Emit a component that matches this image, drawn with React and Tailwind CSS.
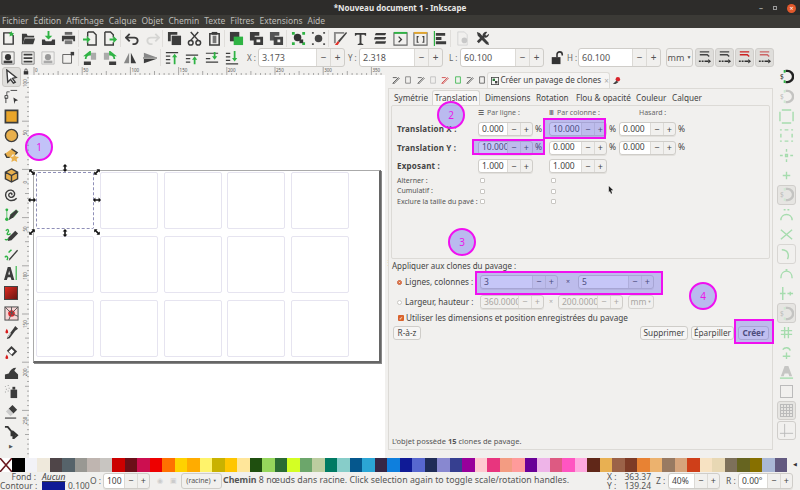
const P = ({ d, c = "#3c3c3c", s, w = 1.5 }) => (
  <path d={d} fill={s ? "none" : c} stroke={s ? c : "none"} strokeWidth={s ? w : 0} />
);

const G = "#2fb344";

// 16x16 drawings for the toolbars
const icons = {
  new: <><P d="M3 2h7l3 3v9H3z" c="#333" s /><P d="M11 0l1 2 2 .3-1.500 1.500.4 2-1.900-1-1.900 1 .4-2L8 2.300 10 2z" c={G} /></>,
  open: <><P d="M1 3h5l1 2h7v2H4l-2 7H1z" /><P d="M4 8h11l-2 6H2z" /></>,
  imp: <><P d="M7 0h2v5h3L8 9 4 5h3z" c={G} /><P d="M1 9h3l1 2h6l1-2h3v6H1z" /></>,
  print: <><P d="M4 1h8v3H4z" c="#666" /><P d="M1 5h14v6h-2V9H3v2H1z" /><P d="M4 10h8v4H4z" c="#777" /></>,
  impDoc: <><P d="M5 1h6l3 3v11H5v-3M5 6V1" s /><P d="M0 8h4V5l4 4-4 4v-3H0z" c={G} /></>,
  expDoc: <><P d="M2 1h6l3 3v3M11 12v3H2V1" s /><P d="M7 8h4V5l4 4-4 4v-3H7z" c={G} /></>,
  undo: <P d="M5 3L1 7l4 4M1 7h9a3.500 3.500 0 0 1 0 7H8" s w={2} />,
  redo: <P d="M11 3l4 4-4 4M15 7H6a3.500 3.500 0 0 0 0 7h2" s c="#d5d5d3" w={2} />,
  dup: <><P d="M1 1h10v3H4v7H1z" /><P d="M5 5h10v10H5z" /></>,
  cut: <><P d="M4 1l8 9M12 1L4 10" s w={1.6} /><circle cx="4" cy="12.500" r="2.500" fill="none" stroke="#3c3c3c" strokeWidth="1.600" /><circle cx="12" cy="12.500" r="2.500" fill="none" stroke="#3c3c3c" strokeWidth="1.600" /></>,
  paste: <><P d="M3 3h10v12H3z" s w={1.6} /><P d="M5 1h6v3H5z" /><P d="M6 5h4v8H6z" c="#777" /></>,
  clone: <><P d="M1 1h10v10H1z" /><P d="M5 6h10v9H5z" c="#2fb344" /></>,
  cloneA: <><P d="M1 1h10v4H6v5H1z" /><P d="M5 6h10v9H5zM8 9v3h4V9z" /></>,
  cloneB: <><P d="M1 1h10v4H6v5H1z" c="#555" /><P d="M5 6h10v9H5zM9 9v3h3V9z" c="#444" /></>,
  group: <><P d="M1 1h3v3H1zM12 1h3v3h-3zM1 12h3v3H1zM12 12h3v3h-3z" c={G} /><circle cx="7" cy="7" r="4" fill="#333" /><P d="M9 9h4v4H9z" c="#333" /></>,
  ungroup: <><P d="M1 1h2v2H1zM13 1h2v2h-2zM1 13h2v2H1zM13 13h2v2h-2z" c="#555" /><circle cx="8" cy="8" r="4" fill="#444" /></>,
  fill: <><P d="M1 1h11v2H3v10H1z" c="#888" /><P d="M14 1l1 1-8 10-2-1z" c="#444" /><P d="M2 15l3-4 2 1-2 3z" c="#e3332a" /></>,
  text: <P d="M2 2h12v3h-1l-1-1H9v9l2 1v1H5v-1l2-1V4H4L3 5H2z" />,
  layers: <P d="M3 2h11l-1 2.500H2zM2 6.500h12l-1 2.500H1zM3 11h11l-1 2.500H2z" />,
  xml: <><P d="M1 2h14v13H1z" s c="#666" w={1.2} /><P d="M1 1h14v2H1z" c={G} /><P d="M6 6l3 3-3 3" s w={1.4} /></>,
  obj: <><P d="M1 2h14v13H1z" s c="#666" w={1.2} /><P d="M1 1h14v2H1z" c="#e2a52c" /><P d="M6 6H4.500v6H6M10 6h1.500v6H10" s w={1.2} /></>,
  align: <><P d="M1.500 0v16" s c={G} w={1.3} /><P d="M3 2h10v3H3zM3 6.500h6v3H3zM3 11h11v3H3z" /></>,
  doc: <><P d="M3 1h7l3 3v11H3z" s c="#d4d4d4" w={1} /><circle cx="10" cy="10" r="3" fill="#c8c8c8" /></>,
  tools: <><P d="M2 1l3 1 9 10 1 3-3-1L3 5z" /><P d="M13 1l-2 3 1 1 3-2a4 4 0 0 1-5 4l-6 6-2-2 6-6a4 4 0 0 1 5-4z" /></>,
  selSame: <><P d="M1 1h14v14H1z" s c="#777" w={1} /><circle cx="8" cy="7" r="3.500" fill="#333" /><P d="M3 11h10v3H3z" /></>,
  selLayers: <><P d="M1 1h14v14H1z" s c="#777" w={1} /><P d="M3 3h10v2H3zM3 7h10v2H3zM3 11h10v2H3z" /></>,
  selFaint: <><P d="M1 1h14v14H1z" s c="#bbb" w={1} /><circle cx="8" cy="7" r="3.500" fill="#9a9a9a" /><P d="M3 11h10v3H3z" c="#aaa" /></>,
  deselect: <><P d="M2 4h10v10H2z" s c="#555" w={1} /><P d="M11 1h4v4h-4z" /></>,
  rotL: <><P d="M9 2h6v8H9z" c="#aaa" /><P d="M1 12h8v4H1z" /><P d="M3 9a5 5 0 0 1 5-5V1l-5 4 1 0" s c={G} w={2} /></>,
  rotR: <><P d="M1 2h6v8H1z" c="#aaa" /><P d="M7 12h8v4H7z" /><P d="M13 9a5 5 0 0 0-5-5V1l5 4-1 0" s c={G} w={2} /></>,
  flipH: <><P d="M7 2v12H1z" c="#888" /><P d="M9 2v12h6z" /></>,
  flipV: <><P d="M1 7h14L1 2z" c="#888" /><P d="M1 9h14l-14 5z" /><P d="M0 8h16" s w={1} /></>,
  top: <><P d="M1 1h14v1.500H1zM1 5h5v1.500H1zM1 9h5v1.500H1zM1 13h5v1.500H1z" /><P d="M11 3l3 4h-2v8h-2V7H8z" c={G} /></>,
  up: <><P d="M1 4h14v1.500H1zM1 8h5v1.500H1zM1 12h5v1.500H1z" /><P d="M11 6l3 4h-2v5h-2v-5H8z" c={G} /></>,
  down: <><P d="M1 3h14v-1H1zM1 8h5v1.500H1zM1 12h14v1.500H1z" /><P d="M11 10l3-4h-2V1h-2v5H8z" c={G} /></>,
  bottom: <><P d="M1 14h14v1.500H1zM1 2h5v1.500H1zM1 6h5v1.500H1zM1 10h5v1.500H1z" /><P d="M11 12l3-4h-2V0h-2v8H8z" c={G} /></>,
  select: <><P d="M3 1l10 8-4 1 3 4-2 1-3-4-3 3z" c="#fff" /><P d="M3 1l10 8-4 1 3 4-2 1-3-4-3 3z" s w={1.5} /></>,
  node: <><P d="M1 7h3v3H1zM7 1.500h7" s c="#444" w={1} /><P d="M3 7V3h3" s c="#555" w={1} /><P d="M10 9l5 3-3 1-1 3z" /><P d="M2 9v6" s w={1} /></>,
  rect: <><P d="M1.500 1.500h13v13h-13z" c="#e9a52a" /><P d="M1.500 1.500h13v13h-13z" s w={1.8} /></>,
  circle: <circle cx="8" cy="8" r="6.500" fill="#e9b04d" stroke="#3c3c3c" strokeWidth="1.500" />,
  star: <><P d="M8 1l6 4-2 2H9l-2 3H3L1 6z" c="#e9b04d" /><P d="M8 1l6 4-2 2M1 6l2 4h3" s w={1.5} /><P d="M11 6l1.500 3 3.500.5-2.500 2.300.6 3.200-3.100-1.600-3.100 1.600.6-3.200L6.500 9.500 10 9z" c="#e9b04d" /></>,
  box: <><P d="M8 1l6.500 3.500v7L8 15l-6.500-3.500v-7z" c="#e9b04d" /><P d="M8 1l6.500 3.500v7L8 15l-6.500-3.500v-7zM1.500 4.500L8 8l6.500-3.500M8 8v7" s w={1.5} /></>,
  spiral: <P d="M8 8.500c1-1 0-2.500-1.500-2-2 .7-2 4 .5 4.500 3 .5 5-2.500 4-5-1-3-5-3.500-7.500-1.500-3 2.500-2 8 2 9.500 3 1 6 .2 8-2" s w={1.5} />,
  pen: <><circle cx="3" cy="3" r="1.500" fill={G} /><circle cx="3" cy="13" r="1.800" fill={G} /><P d="M3 3v10M6 12l1-4 6-5 2 2-5 6z" s c={G} w={0.8} /><P d="M5 14l2-6 6-5 2 2-5 6z" /></>,
  pencil: <><P d="M2 4c2-3 4 0 2 2s1 3 3 1" s c={G} w={1.5} /><P d="M1 13c1 1 3 1 4-1" s c={G} w={1.5} /><P d="M4 15l1-4 7-7 3 3-7 7z" /></>,
  callig: <><P d="M1 11c2-3 4 1 2 3M5 6c1-2 2-2 3-3" s c={G} w={1.5} /><P d="M5 15l1-3 8-9 1 1-8 9z" /></>,
  textA: <><P d="M4 1h3l4 14H8l-1-3H4l-1 3H0zM4.500 9h2L5.500 5z" /><P d="M13 0v15" s c={G} w={1.2} /></>,
  drop: <><P d="M3 4c-2 3-2 5 0 5s2-2 0-5z" c="#d71c1c" /><P d="M12 1l3 3-3 2-6 8-3 1 1-3 6-8z" /><P d="M7 9l-3 4" s c="#fff" w={1} /></>,
  bucket: <><P d="M8 1l6 6-5 5-6-6z" /><P d="M8 4l3 3-3 3-3-3z" c="#fff" /><P d="M3 10c-2 3-2 5 0 5s2-2 0-5z" c="#d71c1c" /></>,
  tweak: <P d="M1 15v-5l4-1c2-4 4-6 8-6l-2 3 4 4v5z" />,
  spray: <><P d="M7 6h7v9H7z" /><P d="M9 3h3v3H9z" /><P d="M1 2h1v1H1zM4 1h1v1H4zM2 5h1v1H2zM5 4h1v1H5zM1 8h1v1H1zM4 7h1v1H4z" c="#999" /></>,
  eraser: <><P d="M9 1l5 5-4 4-5-5z" /><P d="M5 5l5 5-3 3-5-5z" c="#ccc" /><P d="M1 15h12" s w={1.2} /></>,
  conn: <P d="M1 3h3l4 5v4l4 0M10 8.500l4 3.500-4 3.500z" c="#333" s w={2} />,
};

const Icon = ({ n, size = 16 }) => (
  <svg viewBox="0 0 16 16" width={size} height={size}>{icons[n]}</svg>
);

const Spin = ({ v, w, off, h = "h-[14px]" }) => (
  <div className={`flex items-stretch rounded-[3px] border border-[#cfcdc9] text-[8.500px] shadow-[0_1px_0_#e2e0dc] ${off ? "text-[#a9a7a3]" : "text-[#444]"} ${w} ${h}`}>
    <div className={`flex flex-1 items-center overflow-hidden whitespace-nowrap rounded-l-[3px] pl-[3px] ${off ? "bg-[#f1f0ee]" : "bg-white"}`}>{v}</div>
    <div className="flex w-[12.500px] items-center justify-center border-l border-[#dcdad6] text-[9px]">−</div>
    <div className="flex w-[12.500px] items-center justify-center border-l border-[#dcdad6] text-[9px]">+</div>
  </div>
);

const TopSpin = ({ label, v, w, ml }) => (
  <div className={`flex items-center ${ml}`}>
    <span className="mr-[3px] w-[8px] whitespace-nowrap text-[8px] text-[#666]">{label}</span>
    <div className={`flex h-[19px] items-stretch rounded-[3px] border border-[#cfcdc9] text-[9px] leading-[17px] text-[#555] ${w}`}>
      <div className="flex-1 rounded-l-[3px] bg-white pl-[3px]">{v}</div>
      <div className="flex w-[14px] items-center justify-center border-l border-[#dcdad6] text-[10px]">−</div>
      <div className="flex w-[14px] items-center justify-center border-l border-[#dcdad6] text-[10px]">+</div>
    </div>
  </div>
);

const Sep = () => <div className="mr-[1px] h-[17px] w-px bg-[#e0dedb]" />;

const row1 = ["new", "open", "imp", "print", 0, "impDoc", "expDoc", 0, "undo", "redo", 0, "dup", "cut", "paste", 0, "clone", "cloneA", "cloneB", 0, "group", "ungroup", 0, "fill", "text", "layers", "xml", "obj", "align", 0, "doc", "tools"];
const row2 = ["selSame", "selLayers", "selFaint", "deselect", 0, "rotL", "rotR", "flipH", "flipV", 0, "top", "up", "down", "bottom"];
const tools = ["select", "node", "rect", "circle", "star", "box", "spiral", "pen", "pencil", "callig", "textA", "grad", "mesh", "drop", "bucket", "tweak", "spray", "eraser", "conn"];

const palette = ["#000000", "#f2f2f7", "#efe9dc", "#4f4548", "#56636a", "#999893", "#bfb5b0", "#c8c5c1", "#cc0000", "#6b0f18", "#cc0f50", "#ee0000", "#ff7100", "#ffd200", "#ffac00", "#fff36b", "#c9b200", "#ffc600", "#ffe69a", "#1f4f0f", "#96d65c", "#2a6c33", "#d4ff24", "#6ca66b", "#bccda0", "#007a63", "#87cdc9", "#05578d", "#2ba5d5", "#372746", "#0e7fdd", "#0f1a96", "#5767cf", "#1f2c58", "#8888d0", "#363f90", "#98009b", "#ffc9d0", "#e8357e", "#f39c82", "#ff9b9b", "#690097", "#eeb4e8", "#dd5a82", "#ff55c1", "#ffa9df", "#602718", "#e8b052", "#9b6248", "#7e3b26", "#e88233", "#ecb26e", "#987a62", "#d6a47c", "#cf3f19", "#f7e2c2", "#e8d8b4", "#7d705a", "#666420", "#877000", "#aab8d6", "#635a80"];

const Magnet = ({ dark, framed }) => (
  <div className={`flex h-[19.700px] w-[19px] shrink-0 items-center justify-center rounded-[3px] ${framed ? "border border-[#d0cecb] bg-[#e6e5e2]" : ""}`}>
    <svg viewBox="0 0 16 16" width="15" height="15">
      <P d="M7 2h2a6 6 0 0 1 0 12H7" s c={dark ? "#222" : "#c4c4c2"} w={2.600} />
      <P d="M5 1h2v3H5zM5 12h2v3H5z" c={dark ? G : "#cfe8d2"} />
      <text x="1" y="11" fontSize="7" fill={dark ? "#222" : "#bbb"}>$</text>
    </svg>
  </div>
);

const Snap = ({ d, framed }) => (
  <div className={`flex h-[19.700px] w-[19px] shrink-0 items-center justify-center rounded-[3px] ${framed ? "border border-[#d8d6d3]" : ""}`}>
    <svg viewBox="0 0 16 16" width="15" height="15"><P d={d} s c="#a6dcae" w={1.500} /></svg>
  </div>
);

const hLabels = [0, 50, 100, 150, 200, 250, 300, 350];
const vLabels = [100, 50, 0, 50, 100, 150, 200, 250];

const Marker = ({ n, pos }) => (
  <div className={`absolute flex h-[28px] w-[28px] items-center justify-center rounded-full border-2 border-[#f010f0] bg-[#7878f0]/45 text-[10px] text-[#e818e8] ${pos}`}>{n}</div>
);

const Box = ({ pos }) => <div className={`absolute border-2 border-[#f010f0] bg-[#5c5ce8]/35 ${pos}`} />;

const Check = () => <div className="h-[5px] w-[5px] rounded-[1px] border border-[#c9c7c3] bg-white" />;

const Handle = ({ pos, rot }) => (
  <svg viewBox="0 0 10 10" width="8" height="8" className={`absolute ${pos} ${rot}`}>
    <path d="M5 0l3 3H6v4h2l-3 3-3-3h2V3H2z" fill="#111" />
  </svg>
);

export default function App() {
  return (
    <div className="relative flex h-[490px] w-[800px] flex-col overflow-hidden bg-[#f1f0ee] font-['Noto_Sans',sans-serif] text-[#444]">
      <div className="flex h-[15px] items-center justify-center bg-[#2d2c2a] text-[8px] font-bold text-[#e8e8e6]">
        *Nouveau document 1 - Inkscape
        <div className="absolute right-[4px] top-[2px] flex items-center gap-[10px]">
          <span className="text-[8px] text-[#999]">–</span>
          <div className="h-[4px] w-[4px] border border-[#999]" />
          <div className="flex h-[9px] w-[9px] items-center justify-center rounded-full bg-[#e2592c] text-[7px] font-normal leading-none text-white">×</div>
        </div>
      </div>
      <div className="flex h-[13px] items-center gap-[5px] bg-[#3b3a36] pl-[2px] text-[8.500px] text-[#bdbcb8]">
        {["Fichier", "Édition", "Affichage", "Calque", "Objet", "Chemin", "Texte", "Filtres", "Extensions", "Aide"].map((m) => <span key={m}>{m}</span>)}
      </div>

      <div className="ml-[-2px] flex h-[20px] items-center pt-[1px]">
        {row1.map((n, i) => n ? <div key={i} className="flex w-[20px] justify-center"><Icon n={n} size={15} /></div> : <Sep key={i} />)}
      </div>
      <div className="ml-[-2px] flex h-[19px] items-center">
        {row2.map((n, i) => n ? <div key={i} className="flex w-[20px] justify-center"><Icon n={n} size={14} /></div> : <Sep key={i} />)}
        <TopSpin label="X :" v="3.173" w="w-[87px]" ml="ml-[5px]" />
        <TopSpin label="Y :" v="2.318" w="w-[84px]" ml="ml-[3px]" />
        <TopSpin label="L :" v="60.100" w="w-[84px]" ml="ml-[6px]" />
        <svg viewBox="0 0 16 16" width="14" height="14" className="ml-[6px]"><P d="M2 7h10v8H2z" c="#333" /><P d="M8 7V4a3 3 0 0 1 6 0v1" s c="#333" w={1.800} /></svg>
        <TopSpin label="H :" v="60.100" w="w-[83px]" ml="ml-[3px]" />
        <div className="ml-[5px] flex h-[19px] w-[27px] items-center justify-center rounded-[3px] border border-[#cfcdc9] text-[9px] text-[#555]">mm<span className="ml-[2px] text-[5px]">▼</span></div>
        <div className="ml-[2px] flex gap-[1.500px]">
          {["#444", "#444", "#c22", "#c66"].map((c, i) => (
            <div key={i} className="flex h-[19px] w-[18.500px] items-center justify-center rounded-[3px] border border-[#d0cecb] bg-[#dfdedb]">
              <svg viewBox="0 0 16 16" width="15" height="15"><P d="M3 2h10M3 5h8l2 2" s c={c} w={1.500} /><P d="M2 12h2M5 12h2M8 12h4" s c="#333" w={1.500} /><P d="M12 9.500l3 2.500-3 2.500z" c="#333" /></svg>
            </div>
          ))}
        </div>
      </div>

      <div className="flex min-h-0 flex-1">
        <div className="flex w-[22px] flex-col items-center">
          {tools.map((t, i) => (
            <div key={t} className={`relative flex h-[19.700px] w-[19px] shrink-0 items-center justify-center rounded-[3px] ${i === 0 ? "border border-[#c9c7c3] bg-[#dfdedb]" : ""}`}>
              {t === "grad" ? (
                <div className="h-[14px] w-[14px] border-[1.500px] border-[#444] bg-gradient-to-br from-[#e02a20] to-[#6b1512]" />
              ) : t === "mesh" ? (
                <svg viewBox="0 0 16 16" width="15" height="15"><rect x="1" y="1" width="14" height="14" fill="#f5d5d5" stroke="#444" /><circle cx="8" cy="8" r="3.500" fill="#d9282c" /><path d="M1 1l7 7-3 7M15 1L8 8l7 3M8 1v7" fill="none" stroke="#555" /></svg>
              ) : (
                <Icon n={t} size={15} />
              )}
            </div>
          ))}
          <div className="mt-[2px] text-[5px] text-[#555]">▶</div>
        </div>

        <div className="flex w-[366px] flex-col">
          <div className="flex h-[8px]">
            <div className="flex w-[7px] items-center justify-center">
              <svg viewBox="0 0 8 8" width="6" height="7"><P d="M1 3.500h6V8H1z" c="#333" /><P d="M2.500 3.500V2a1.500 1.500 0 0 1 3 0v1.500" s c="#333" w={1} /></svg>
            </div>
            <svg width="356" height="8" className="bg-[#f1f0ee]">
              {Array.from({ length: 74 }, (_, i) => (
                <line key={i} x1={i * 4.820 + 5} x2={i * 4.820 + 5} y1={i % 10 === 0 ? 0 : i % 5 === 0 ? 4 : 6} y2="8" stroke="#777" strokeWidth="0.600" />
              ))}
              {hLabels.map((l, i) => <text key={i} x={i * 48.200 + 6} y="5" fontSize="4.500" fill="#555">{l}</text>)}
            </svg>
          </div>
          <div className="flex min-h-0 flex-1">
            <svg width="7" height="383" className="shrink-0">
              {Array.from({ length: 80 }, (_, i) => (
                <line key={i} x1={i % 10 === 0 ? 0 : i % 5 === 0 ? 3 : 5} x2="7" y1={i * 4.820 - 2} y2={i * 4.820 - 2} stroke="#777" strokeWidth="0.600" />
              ))}
              {vLabels.map((l, i) => <text key={i} transform={`translate(4.500 ${i * 48.200 + 12}) rotate(-90)`} fontSize="4.500" fill="#555">{l}</text>)}
            </svg>
            <div className="w-[356px] bg-white pl-[4px] pt-[95px]">
              <div className="relative grid h-[193px] w-[348px] grid-cols-[repeat(5,58px)] grid-rows-[repeat(3,57px)] gap-x-[5.750px] gap-y-[7px] border border-[#aaa] border-b-[2px] border-r-[2px] border-b-[#666] border-r-[#666] pl-[2px] pt-[1px] shadow-[1px_1px_0_#888]">
                {Array.from({ length: 15 }, (_, i) => (
                  <div key={i} className={`rounded-[2px] border ${i === 0 ? "border-dashed border-[#8f8fb8]" : "border-[#e6e4f0]"}`} />
                ))}
                <Handle pos="left-[-6px] top-[-3px]" rot="-rotate-45" />
                <Handle pos="left-[27px] top-[-7px]" rot="" />
                <Handle pos="left-[59px] top-[-3px]" rot="rotate-45" />
                <Handle pos="left-[-6px] top-[25px]" rot="rotate-90" />
                <Handle pos="left-[59px] top-[25px]" rot="rotate-90" />
                <Handle pos="left-[-6px] top-[57px]" rot="rotate-45" />
                <Handle pos="left-[27px] top-[58px]" rot="" />
                <Handle pos="left-[59px] top-[57px]" rot="-rotate-45" />
              </div>
            </div>
            <div className="relative w-[3px]">
              <div className="absolute left-[0px] top-[184px] text-[7px] leading-none text-[#666]">⋮</div>
            </div>
          </div>
        </div>

        <div className="flex w-[385px] flex-col pt-[5px]">
          <div className="flex h-[16px] items-center pl-[2px]">
            {["#444", "#777", "#555", "#bbb", "#c33", G, "#555", "#555"].map((c, i) => (
              <div key={i} className="flex h-[12px] w-[12.300px] items-center justify-center">
                <svg viewBox="0 0 10 10" width="8" height="8"><P d={i % 2 ? "M2 1h6v8H2z" : "M1 9L8 2l1 1-7 7zM1 2h5"} s c={c} w={1} /></svg>
              </div>
            ))}
            <div className="ml-[-1px] flex h-[16px] w-[123px] items-center rounded-t-[3px] border border-b-0 border-[#dedcd8] bg-[#f6f5f4] pl-[3px] text-[8.100px] text-[#444]">
              <svg viewBox="0 0 10 10" width="8" height="8" className="mr-[1px] shrink-0"><rect x="0.500" y="0.500" width="9" height="9" fill="none" stroke="#444" /><rect x="2" y="2" width="3" height="3" fill="#2a7a3a" /><rect x="5" y="5" width="3" height="3" fill="#444" /></svg>
              <span className="whitespace-nowrap">Créer un pavage de clones</span>
              <span className="ml-[3px] text-[8px] text-[#aaa]">×</span>
            </div>
            <svg viewBox="0 0 10 10" width="9" height="9" className="ml-[2px]"><circle cx="6.500" cy="3.500" r="2.500" fill="#d8232a" /><P d="M1 9l4-4 2 2-3 2z" c="#444" /></svg>
          </div>

          <div className="relative mb-[8px] flex flex-1 flex-col border border-[#dcdad6] bg-[#f1f0ee] px-[2px]">
            <div className="flex h-[16px] items-end whitespace-nowrap pl-[1px] text-[8.200px] text-[#444]">
              <span className="w-[40px] pb-[1px] pl-[2px]">Symétrie</span>
              <span className="flex h-[15px] w-[48px] items-center justify-center rounded-t-[3px] border border-b-0 border-[#d8d6d2] bg-[#f8f7f6]">Translation</span>
              <span className="w-[51px] pb-[1px] pl-[5px]">Dimensions</span>
              <span className="w-[40px] pb-[1px] pl-[5px]">Rotation</span>
              <span className="w-[60px] pb-[1px] pl-[5px]">Flou &amp; opacité</span>
              <span className="w-[36px] pb-[1px] pl-[5px]">Couleur</span>
              <span className="w-[36px] pb-[1px] pl-[5px]">Calquer</span>
            </div>

            <div className="flex h-[154px] flex-col rounded-[2px] border border-[#dcdad6] pl-[5px] pt-[1px]">
              <div className="grid grid-cols-[81px_71px_70px_72px] items-center text-[7px] text-[#666]">
                <span />
                <span className="flex h-[12px] items-center"><span className="mr-[3px] text-[#444]">☰</span>Par ligne :</span>
                <span className="flex h-[12px] items-center"><span className="mr-[3px] text-[#444]">Ⅲ</span>Par colonne :</span>
                <span className="flex h-[12px] items-center pl-[20px]">Hasard :</span>
              </div>
              <div className="mt-[1px] grid grid-cols-[81px_71px_70px_72px] grid-rows-[18.500px_18.500px_18.500px] items-center text-[8.500px]">
                <b className="text-[8px] tracking-[.2px] text-[#444]">Translation X :</b>
                <div className="flex items-center gap-[2px]"><Spin v="0.000" w="w-[55px]" /><span>%</span></div>
                <div className="flex items-center gap-[2px]"><Spin v="10.000" w="w-[58px]" /><span>%</span></div>
                <div className="flex items-center gap-[2px]"><Spin v="0.000" w="w-[57px]" /><span>%</span></div>
                <b className="text-[8px] tracking-[.2px] text-[#444]">Translation Y :</b>
                <div className="flex items-center gap-[2px]"><Spin v="10.000" w="w-[55px]" /><span>%</span></div>
                <div className="flex items-center gap-[2px]"><Spin v="0.000" w="w-[58px]" /><span>%</span></div>
                <div className="flex items-center gap-[2px]"><Spin v="0.000" w="w-[57px]" /><span>%</span></div>
                <b className="text-[8px] tracking-[.2px] text-[#444]">Exposant :</b>
                <Spin v="1.000" w="w-[55px]" />
                <Spin v="1.000" w="w-[58px]" />
                <span />
              </div>
              <div className="grid grid-cols-[81px_71px_70px] grid-rows-[repeat(3,10.500px)] items-center text-[7px] text-[#555]">
                <span>Alterner :</span><span className="pl-[2px]"><Check /></span><span className="pl-[2px]"><Check /></span>
                <span>Cumulatif :</span><span className="pl-[2px]"><Check /></span><span className="pl-[2px]"><Check /></span>
                <span className="whitespace-nowrap">Exclure la taille du pavé :</span><span className="pl-[2px]"><Check /></span><span className="pl-[2px]"><Check /></span>
              </div>
            </div>

            <div className="mt-[1px] pl-[1px] text-[8px] leading-[12px]">Appliquer aux clones du pavage :</div>
            <div className="mt-[3px] flex h-[14px] items-center pl-[6px] text-[8.200px]">
              <div className="mr-[3px] h-[5px] w-[5px] rounded-full border border-[#c9532b] bg-[#fff] shadow-[inset_0_0_0_1px_#d9632b]" />
              <span className="w-[75px] whitespace-nowrap">Lignes, colonnes :</span>
              <Spin v="3" w="w-[78px]" />
              <span className="w-[20px] text-center text-[7px]">×</span>
              <Spin v="5" w="w-[76px]" />
            </div>
            <div className="mt-[6px] flex h-[14px] items-center pl-[6px] text-[8.200px]">
              <div className="mr-[3px] h-[5px] w-[5px] rounded-full border border-[#c9c7c3] bg-white" />
              <span className="w-[75px] whitespace-nowrap">Largeur, hauteur :</span>
              <Spin v="360.0000" w="w-[64px]" off />
              <span className="w-[14px] text-center text-[7px] text-[#aaa]">×</span>
              <Spin v="200.0000" w="w-[65px]" off />
              <div className="ml-[5px] flex h-[14px] w-[26px] items-center justify-center rounded-[3px] border border-[#d5d3cf] text-[8.500px] text-[#a9a7a3]">mm<span className="ml-[1px] text-[4px]">▼</span></div>
            </div>
            <div className="mt-[3px] flex h-[12px] items-center pl-[7px] text-[8.200px]">
              <div className="mr-[2px] flex h-[6px] w-[6px] items-center justify-center rounded-[1px] bg-[#d9632b] text-[5px] leading-none text-white">✓</div>
              Utiliser les dimensions et position enregistrées du pavage
            </div>
            <div className="mt-[2px] flex h-[14px] items-center pl-[2px] text-[8.200px]">
              <div className="flex h-[14px] w-[28px] items-center justify-center rounded-[3px] border border-[#cfcdc9] bg-[#f6f5f4]">R-à-z</div>
              <div className="ml-auto flex h-[14px] w-[48px] items-center justify-center rounded-[3px] border border-[#cfcdc9] bg-[#f6f5f4]">Supprimer</div>
              <div className="ml-[3px] flex h-[14px] w-[43px] items-center justify-center rounded-[3px] border border-[#cfcdc9] bg-[#f6f5f4]">Éparpiller</div>
              <div className="ml-[4px] mr-[1px] flex h-[14px] w-[31px] items-center justify-center rounded-[3px] border border-[#cfcdc9] bg-[#f6f5f4] font-bold">Créer</div>
            </div>
            <div className="mb-[2px] mt-auto pl-[1px] text-[7.500px] text-[#555]">L'objet possède <b>15</b> clones de pavage.</div>
          </div>
        </div>

        <div className="flex w-[27px] flex-col items-center">
          <Magnet dark />
          <Magnet />
          <Snap d="M3 1h10M3 15h10M1 3v10M15 3v10" />
          <Snap d="M1 2h2M13 2h2M1 14h2M13 14h2M6 2h4M6 14h4M2 6v4M14 6v4" />
          <Snap d="M8 1v3M8 12v3M1 8h3M12 8h3M7 7h2v2H7z" />
          <Snap d="M8 4v8M4 8h8" />
          <Magnet framed />
          <Snap d="M2 14C2 6 14 6 14 14M5 3h2M9 3h2" />
          <Snap d="M2 3l12 10M14 3L2 13" />
          <Snap d="M3 3c7 0 8 6 6 10" framed />
          <Snap d="M2 13C2 3 14 3 14 13M7 4h2" />
          <Snap d="M4 1v14M1 8h6M12 6v4M9 8h6" />
          <Magnet framed />
          <Snap d="M2 6h12M2 10h12M6 2v12M10 2v12" />
          <Snap d="M8 8v7M4 12h8M4 5c2-3 7-3 8 1" />
          <div className="flex h-[19.700px] w-[19px] shrink-0 items-center justify-center">
            <svg viewBox="0 0 16 16" width="15" height="15"><P d="M6 1h4l4 11h-3l-1-3H6l-1 3H2z" c="#c6c6c4" /><P d="M1 14h14" s c="#a6dcae" w={1.500} /></svg>
          </div>
          <div className="mt-[3px] h-[13px] w-[13px] shrink-0 border border-[#bbb]" />
          <div className="mt-[3px] h-[19px] w-[19px] shrink-0 rounded-[3px] border border-[#d0cecb] bg-[#e6e5e2] p-[2px]">
            <div className="h-full w-full bg-[repeating-linear-gradient(0deg,#bbb_0_1px,transparent_1px_3px),repeating-linear-gradient(90deg,#bbb_0_1px,transparent_1px_3px)]" />
          </div>
          <div className="mt-[1px] flex h-[19px] w-[19px] shrink-0 items-center justify-center rounded-[3px] border border-[#d0cecb]">
            <svg viewBox="0 0 16 16" width="15" height="15"><P d="M6 1v14M1 11h14" s c="#bbb" w={1} /></svg>
          </div>
        </div>
      </div>

      <div className="flex h-[14px] items-stretch pr-[13px]">
        <svg viewBox="0 0 12 14" width="12" height="14" preserveAspectRatio="none" className="shrink-0 bg-white"><path d="M0 0l12 14M12 0L0 14" stroke="#6b1a20" strokeWidth="1.500" /></svg>
        {palette.map((c, i) => <div key={i} className="flex-1" style={{ background: c }} />)}
        <div className="absolute right-[3px] top-[461px] text-[5px] text-[#333]">◀</div>
      </div>

      <div className="flex h-[18px] items-center whitespace-nowrap text-[8.500px] text-[#555]">
        <div className="grid w-[90px] grid-cols-[42px_1fr] leading-[9px]">
          <span className="pr-[6px] text-right">Fond :</span><span className="italic text-[#444] underline">Aucun</span>
          <span>Contour :</span>
          <span className="flex h-[9px] items-center"><span className="h-[8px] w-[23px] bg-[#0f1a96]" /><span className="ml-[3px]">0.100</span></span>
        </div>
        <span className="w-[13px]">O :</span>
        <Spin v="100" w="w-[47px]" h="h-[16px]" />
        <span className="ml-[7px] w-[9px] text-[7px] text-[#ccc]">◉</span>
        <span className="ml-[4px] w-[9px] text-[7px] text-[#ccc]">▣</span>
        <div className="ml-[2px] flex h-[16px] w-[41px] items-center justify-center rounded-[3px] border border-[#cfcdc9] text-[7px]">(racine)<span className="ml-[2px] text-[4px]">▼</span></div>
        <span className="ml-[1px] text-[8.800px]"><b>Chemin</b> 8 nœuds dans racine. Click selection again to toggle scale/rotation handles.</span>
        <div className="ml-auto grid grid-cols-[16px_28px] leading-[9px]">
          <span>X :</span><span className="text-right">363.37</span>
          <span>Y :</span><span className="text-right">139.24</span>
        </div>
        <span className="ml-[5px] mr-[4px] w-[8px]">Z :</span>
        <Spin v="40%" w="w-[52px]" h="h-[16px]" />
        <span className="ml-[6px] mr-[4px] w-[8px]">R :</span>
        <div className="mr-[7px]"><Spin v="0.00°" w="w-[55px]" h="h-[16px]" /></div>
      </div>

      <Marker n="1" pos="left-[25px] top-[133px]" />
      <Marker n="2" pos="left-[437px] top-[101px]" />
      <Marker n="3" pos="left-[448px] top-[228px]" />
      <Marker n="4" pos="left-[689px] top-[282px]" />
      <Box pos="left-[543px] top-[118px] h-[21px] w-[63px]" />
      <Box pos="left-[472px] top-[139px] h-[16px] w-[73px]" />
      <Box pos="left-[475px] top-[271px] h-[24px] w-[188px]" />
      <Box pos="left-[734px] top-[319px] h-[25px] w-[40px]" />
      <svg viewBox="0 0 8 11" width="6" height="8" className="absolute left-[608px] top-[186px]"><path d="M1 0l6 6H4l1.500 4-1.500.5L2.500 7 1 8.500z" fill="#222" /></svg>
    </div>
  );
}
